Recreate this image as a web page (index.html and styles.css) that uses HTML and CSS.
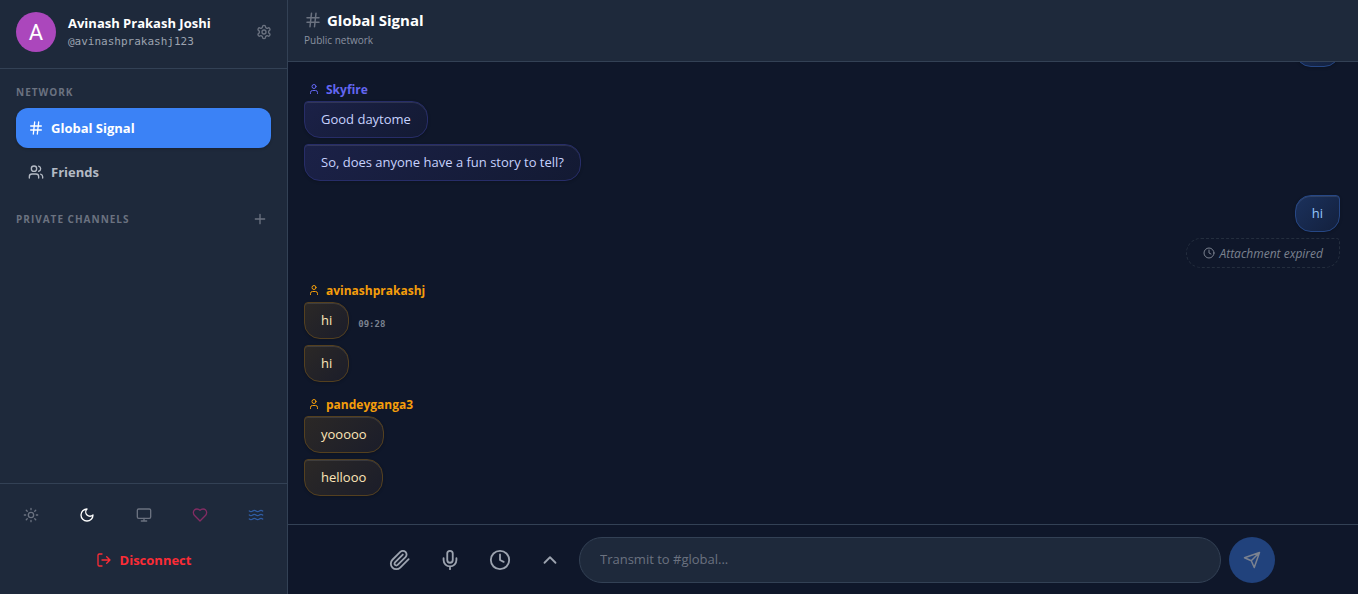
FILE: index.html
```html
<!DOCTYPE html>
<html lang="en">
<head>
    <meta charset="UTF-8">
    <meta name="viewport" content="width=device-width, initial-scale=1.0">
    <title>Global Signal</title>
    <link rel="stylesheet" href="styles.css">
</head>
<body>
    <div class="app">
        <aside class="sidebar">
            <div class="profile">
                <div class="avatar">A</div>
                <div class="profile-info">
                    <div class="profile-name">Avinash Prakash Joshi</div>
                    <div class="profile-handle">@avinashprakashj123</div>
                </div>
                <button class="icon-btn" aria-label="Settings">
                    <svg class="icon icon-16" viewBox="0 0 24 24"><path d="M12.22 2h-.44a2 2 0 0 0-2 2v.18a2 2 0 0 1-1 1.73l-.43.25a2 2 0 0 1-2 0l-.15-.08a2 2 0 0 0-2.73.73l-.22.38a2 2 0 0 0 .73 2.73l.15.1a2 2 0 0 1 1 1.72v.51a2 2 0 0 1-1 1.74l-.15.09a2 2 0 0 0-.73 2.73l.22.38a2 2 0 0 0 2.73.73l.15-.08a2 2 0 0 1 2 0l.43.25a2 2 0 0 1 1 1.73V20a2 2 0 0 0 2 2h.44a2 2 0 0 0 2-2v-.18a2 2 0 0 1 1-1.73l.43-.25a2 2 0 0 1 2 0l.15.08a2 2 0 0 0 2.73-.73l.22-.39a2 2 0 0 0-.73-2.73l-.15-.08a2 2 0 0 1-1-1.74v-.5a2 2 0 0 1 1-1.74l.15-.09a2 2 0 0 0 .73-2.73l-.22-.38a2 2 0 0 0-2.73-.73l-.15.08a2 2 0 0 1-2 0l-.43-.25a2 2 0 0 1-1-1.73V4a2 2 0 0 0-2-2z"/><circle cx="12" cy="12" r="3"/></svg>
                </button>
            </div>

            <nav class="channels">
                <h2 class="section-label">NETWORK</h2>
                <a href="#" class="channel active">
                    <svg class="icon icon-16" viewBox="0 0 24 24"><path d="M4 9h16M4 15h16M10 3 8 21M16 3l-2 18"/></svg>
                    Global Signal
                </a>
                <a href="#" class="channel">
                    <svg class="icon icon-16" viewBox="0 0 24 24"><path d="M16 21v-2a4 4 0 0 0-4-4H6a4 4 0 0 0-4 4v2M22 21v-2a4 4 0 0 0-3-3.87M16 3.13a4 4 0 0 1 0 7.75"/><circle cx="9" cy="7" r="4"/></svg>
                    Friends
                </a>
                <div class="section-row">
                    <h2 class="section-label">PRIVATE CHANNELS</h2>
                    <button class="icon-btn" aria-label="Add channel">
                        <svg class="icon icon-16" viewBox="0 0 24 24"><path d="M5 12h14M12 5v14"/></svg>
                    </button>
                </div>
            </nav>

            <div class="sidebar-footer">
                <div class="themes">
                    <button class="icon-btn" aria-label="Light theme">
                        <svg class="icon icon-16" viewBox="0 0 24 24"><circle cx="12" cy="12" r="4"/><path d="M12 2v2M12 20v2M4.93 4.93l1.41 1.41M17.66 17.66l1.41 1.41M2 12h2M20 12h2M6.34 17.66l-1.41 1.41M19.07 4.93l-1.41 1.41"/></svg>
                    </button>
                    <button class="icon-btn theme-dark" aria-label="Dark theme">
                        <svg class="icon icon-16" viewBox="0 0 24 24"><path d="M12 3a6 6 0 0 0 9 9 9 9 0 1 1-9-9Z"/></svg>
                    </button>
                    <button class="icon-btn" aria-label="System theme">
                        <svg class="icon icon-16" viewBox="0 0 24 24"><rect x="2" y="3" width="20" height="14" rx="2"/><path d="M8 21h8M12 17v4"/></svg>
                    </button>
                    <button class="icon-btn theme-love" aria-label="Love theme">
                        <svg class="icon icon-16" viewBox="0 0 24 24"><path d="M19 14c1.49-1.46 3-3.21 3-5.5A5.5 5.5 0 0 0 16.5 3c-1.76 0-3 .5-4.5 2-1.5-1.5-2.74-2-4.5-2A5.5 5.5 0 0 0 2 8.5c0 2.3 1.5 4.05 3 5.5l7 7Z"/></svg>
                    </button>
                    <button class="icon-btn theme-ocean" aria-label="Ocean theme">
                        <svg class="icon icon-16" viewBox="0 0 24 24"><path d="M2 6c.6.5 1.2 1 2.5 1C7 7 7 5 9.5 5c2.6 0 2.4 2 5 2 2.5 0 2.5-2 5-2 1.3 0 1.9.5 2.5 1M2 12c.6.5 1.2 1 2.5 1 2.5 0 2.5-2 5-2 2.6 0 2.4 2 5 2 2.5 0 2.5-2 5-2 1.3 0 1.9.5 2.5 1M2 18c.6.5 1.2 1 2.5 1 2.5 0 2.5-2 5-2 2.6 0 2.4 2 5 2 2.5 0 2.5-2 5-2 1.3 0 1.9.5 2.5 1"/></svg>
                    </button>
                </div>
                <button class="disconnect">
                    <svg class="icon icon-16" viewBox="0 0 24 24"><path d="M9 21H5a2 2 0 0 1-2-2V5a2 2 0 0 1 2-2h4M16 17l5-5-5-5M21 12H9"/></svg>
                    Disconnect
                </button>
            </div>
        </aside>

        <main class="chat">
            <header class="chat-header">
                <h1 class="chat-title">
                    <svg class="icon icon-18" viewBox="0 0 24 24"><path d="M4 9h16M4 15h16M10 3 8 21M16 3l-2 18"/></svg>
                    Global Signal
                </h1>
                <p class="chat-subtitle">Public network</p>
            </header>

            <div class="messages">
                <div class="group own">
                    <div class="bubble"></div>
                </div>
                <div class="group indigo">
                    <div class="author">
                        <svg class="icon icon-12" viewBox="0 0 24 24"><path d="M19 21v-2a4 4 0 0 0-4-4H9a4 4 0 0 0-4 4v2"/><circle cx="12" cy="7" r="4"/></svg>
                        Skyfire
                    </div>
                    <div class="bubble">Good daytome</div>
                    <div class="bubble">So, does anyone have a fun story to tell?</div>
                </div>
                <div class="group own">
                    <div class="bubble">hi</div>
                    <div class="expired">
                        <svg class="icon icon-12" viewBox="0 0 24 24"><circle cx="12" cy="12" r="10"/><path d="M12 6v6l4 2"/></svg>
                        Attachment expired
                    </div>
                </div>
                <div class="group amber">
                    <div class="author">
                        <svg class="icon icon-12" viewBox="0 0 24 24"><path d="M19 21v-2a4 4 0 0 0-4-4H9a4 4 0 0 0-4 4v2"/><circle cx="12" cy="7" r="4"/></svg>
                        avinashprakashj
                    </div>
                    <div class="message-row">
                        <div class="bubble">hi</div>
                        <time class="time">09:28</time>
                    </div>
                    <div class="bubble">hi</div>
                </div>
                <div class="group amber">
                    <div class="author">
                        <svg class="icon icon-12" viewBox="0 0 24 24"><path d="M19 21v-2a4 4 0 0 0-4-4H9a4 4 0 0 0-4 4v2"/><circle cx="12" cy="7" r="4"/></svg>
                        pandeyganga3
                    </div>
                    <div class="bubble">yooooo</div>
                    <div class="bubble">hellooo</div>
                </div>
            </div>

            <div class="composer">
                <form class="composer-inner">
                    <button type="button" class="tool-btn" aria-label="Attach file">
                        <svg class="icon icon-22" viewBox="0 0 24 24"><path d="m21.44 11.05-9.19 9.19a6 6 0 0 1-8.49-8.49l8.57-8.57A4 4 0 1 1 18 8.84l-8.59 8.57a2 2 0 0 1-2.83-2.83l8.49-8.48"/></svg>
                    </button>
                    <button type="button" class="tool-btn" aria-label="Record voice">
                        <svg class="icon icon-22" viewBox="0 0 24 24"><path d="M12 2a3 3 0 0 0-3 3v7a3 3 0 0 0 6 0V5a3 3 0 0 0-3-3ZM19 10v2a7 7 0 0 1-14 0v-2M12 19v3"/></svg>
                    </button>
                    <button type="button" class="tool-btn" aria-label="Message timer">
                        <svg class="icon icon-22" viewBox="0 0 24 24"><circle cx="12" cy="12" r="10"/><path d="M12 6v6l4 2"/></svg>
                    </button>
                    <button type="button" class="tool-btn" aria-label="More">
                        <svg class="icon icon-22" viewBox="0 0 24 24"><path d="m18 15-6-6-6 6"/></svg>
                    </button>
                    <input type="text" class="message-input" placeholder="Transmit to #global..." aria-label="Message">
                    <button type="submit" class="send-btn" aria-label="Send" disabled>
                        <svg class="icon icon-18" viewBox="0 0 24 24"><path d="m22 2-7 20-4-9-9-4ZM22 2 11 13"/></svg>
                    </button>
                </form>
            </div>
        </main>
    </div>
</body>
</html>
```
FILE: styles.css
```css
* {
    box-sizing: border-box;
}
body {
    margin: 0;
    font-family: "Open Sans", "Noto Sans", sans-serif;
    font-size: 14px;
    color: #fff;
    background: #0f172a;
}
h1, h2, p {
    margin: 0;
}
button, input {
    font-family: inherit;
}
button {
    padding: 0;
    border: none;
    background: none;
    cursor: pointer;
}
.app {
    display: flex;
    height: 100vh;
}

/* Icons */
.icon {
    flex: none;
    fill: none;
    stroke: currentColor;
    stroke-width: 2;
    stroke-linecap: round;
    stroke-linejoin: round;
}
.icon-12 {
    width: 12px;
    height: 12px;
}
.icon-16 {
    width: 16px;
    height: 16px;
}
.icon-18 {
    width: 18px;
    height: 18px;
}
.icon-22 {
    width: 22px;
    height: 22px;
}
.icon-btn {
    display: flex;
    align-items: center;
    justify-content: center;
    width: 30px;
    height: 30px;
    color: #6b7280;
}

/* Sidebar */
.sidebar {
    display: flex;
    flex-direction: column;
    flex: none;
    width: 288px;
    background: #1e293b;
    border-right: 1px solid #334155;
}
.profile {
    display: flex;
    align-items: center;
    gap: 12px;
    padding: 12px 8px 16px 16px;
    border-bottom: 1px solid #334155;
}
.avatar {
    display: flex;
    align-items: center;
    justify-content: center;
    width: 40px;
    height: 40px;
    border-radius: 50%;
    background: #ab47bc;
    font-family: Roboto, sans-serif;
    font-size: 22px;
}
.profile-info {
    flex: 1;
}
.profile-name {
    font-size: 13px;
    font-weight: 700;
    line-height: 20px;
}
.profile-handle {
    font-family: "DejaVu Sans Mono", monospace;
    font-size: 11px;
    line-height: 18px;
    color: #9ca3af;
}
.channels {
    flex: 1;
    padding: 16px;
}
.section-label {
    font-size: 10px;
    font-weight: 700;
    line-height: 14px;
    letter-spacing: 1px;
    color: #6b7280;
}
.section-row {
    display: flex;
    align-items: center;
    justify-content: space-between;
    margin-top: 12px;
    margin-right: -4px;
}
.channel {
    display: flex;
    align-items: center;
    gap: 7px;
    height: 40px;
    margin-top: 4px;
    padding: 0 12px;
    border-radius: 12px;
    font-size: 13px;
    font-weight: 700;
    color: #b4bac4;
    text-decoration: none;
}
.channel.active {
    margin-top: 9px;
    background: #3b82f6;
    color: #fff;
    box-shadow: 0 1px 3px rgba(0, 0, 0, 0.2);
}
.sidebar-footer {
    padding: 16px;
    border-top: 1px solid #334155;
}
.themes {
    display: flex;
    justify-content: space-between;
}
.theme-dark {
    color: #fff;
}
.theme-love {
    color: #832c63;
}
.theme-ocean {
    color: #2f5ca3;
}
.disconnect {
    display: flex;
    align-items: center;
    justify-content: center;
    gap: 8px;
    width: 100%;
    height: 36px;
    margin-top: 12px;
    font-size: 13px;
    font-weight: 700;
    color: #fb2c36;
}

/* Chat */
.chat {
    display: flex;
    flex-direction: column;
    flex: 1;
    min-width: 0;
}
.chat-header {
    padding: 10px 16px 11px;
    background: #1e293b;
    border-bottom: 1px solid #334155;
}
.chat-title {
    display: flex;
    align-items: center;
    gap: 5px;
    font-size: 15px;
    font-weight: 700;
    line-height: 20px;
}
.chat-title .icon {
    color: #6b7280;
}
.chat-subtitle {
    font-size: 10px;
    line-height: 20px;
    color: #8a92a0;
}
.messages {
    display: flex;
    flex-direction: column;
    justify-content: flex-end;
    gap: 14px;
    flex: 1;
    min-height: 0;
    overflow: hidden;
    padding: 0 18px 28px 16px;
}
.group {
    display: flex;
    flex-direction: column;
    align-items: flex-start;
    gap: 6px;
}
.own {
    align-items: flex-end;
}
.author {
    display: flex;
    align-items: center;
    gap: 6px;
    height: 16px;
    margin-bottom: -2px;
    padding-left: 4px;
    font-size: 12px;
    font-weight: 700;
}
.bubble {
    min-width: 45px;
    min-height: 37px;
    padding: 6px 16px 7px;
    border: 1px solid;
    border-radius: 4px 16px 16px 16px;
    box-shadow: inset 0 1px 0 rgba(255, 255, 255, 0.1), 0 1px 3px rgba(0, 0, 0, 0.2);
    font-size: 13px;
    line-height: 22px;
}
.own .bubble {
    border-color: #264785;
    border-radius: 16px 4px 16px 16px;
    background: linear-gradient(135deg, #1b315c, #13203d);
    color: #93c5fd;
}
.indigo .author {
    color: #6366f1;
}
.indigo .bubble {
    border-color: #272d68;
    background: linear-gradient(135deg, #1b2147, #131a33);
    color: #c7d2fe;
}
.amber .author {
    color: #f59e0b;
}
.amber .bubble {
    border-color: #54401f;
    background: linear-gradient(135deg, #2b2826, #1b1d2a);
    color: #fde6b8;
}
.message-row {
    display: flex;
    align-items: center;
    gap: 9px;
}
.time {
    padding-top: 6px;
    font-family: "DejaVu Sans Mono", monospace;
    font-size: 9px;
    font-weight: 700;
    color: #7b8290;
}
.expired {
    display: flex;
    align-items: center;
    gap: 4px;
    height: 30px;
    padding: 0 16px;
    border: 1px dashed #242e3e;
    border-radius: 16px 4px 16px 16px;
    font-size: 12px;
    font-style: italic;
    color: #7b8290;
}

/* Composer */
.composer {
    padding: 12px 12px 11px 20px;
    border-top: 1px solid #334155;
}
.composer-inner {
    display: flex;
    align-items: center;
    gap: 8px;
    max-width: 896px;
    margin: 0 auto;
}
.tool-btn {
    display: flex;
    align-items: center;
    justify-content: center;
    width: 42px;
    height: 42px;
    color: #9ca3af;
}
.message-input {
    flex: 1;
    min-width: 0;
    height: 46px;
    padding: 0 20px 2px;
    border: 1px solid #334155;
    border-radius: 23px;
    background: #1e293b;
    font-size: 13px;
    color: #fff;
}
.message-input::placeholder {
    color: #6b7280;
}
.send-btn {
    display: flex;
    align-items: center;
    justify-content: center;
    width: 46px;
    height: 46px;
    border-radius: 50%;
    background: #21427c;
    color: #7b8290;
}
```
